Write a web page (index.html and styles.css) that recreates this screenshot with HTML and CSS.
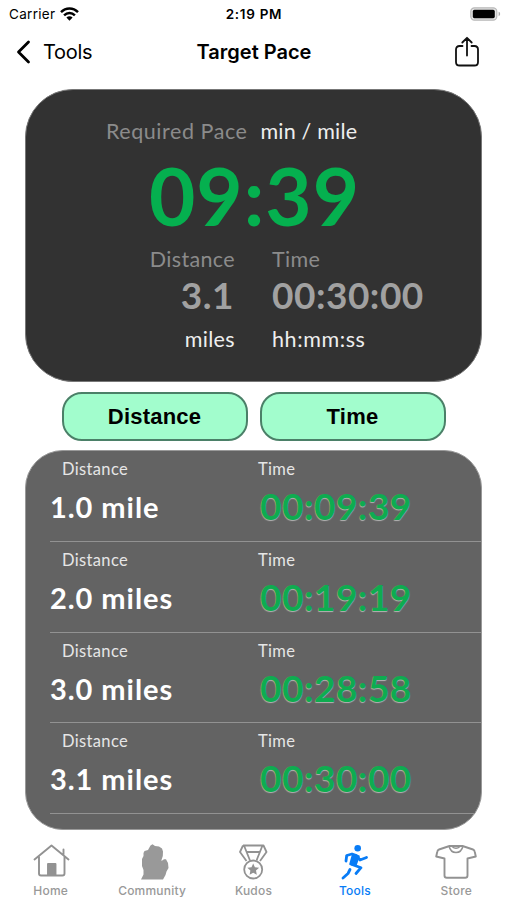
FILE: index.html
```html
<!DOCTYPE html>
<html lang="en">
<head>
<meta charset="utf-8">
<title>Target Pace</title>
<link rel="stylesheet" href="styles.css">
</head>
<body>
<div class="screen">
  <header class="status">
    <div class="carrier"><span>Carrier</span>
      <svg width="19" height="14" viewBox="0 0 19 14" fill="none" stroke="#000" stroke-width="2.4"><path d="M1 5.2C5.8.2 13.2.2 18 5.2M4.1 8.4c3.1-3.2 7.7-3.2 10.8 0"/><path d="M6.4 10.6c1.8-1.7 4.4-1.7 6.2 0L9.5 13.7Z" fill="#000" stroke="none"/></svg>
    </div>
    <div class="clock">2:19 PM</div>
    <svg class="battery" width="31" height="14" viewBox="0 0 31 14"><rect x=".8" y=".8" width="26" height="12.4" rx="3.6" fill="#e4e4e4" stroke="#b8b8b8" stroke-width="1.2"/><rect x="2.8" y="2.8" width="22" height="8.4" rx="1.6"/><path d="M28.6 4.8c2 .5 2 3.9 0 4.4Z" fill="#aaa"/></svg>
  </header>
  <nav class="nav">
    <div class="back"><svg width="15" height="24" viewBox="0 0 15 24" fill="none" stroke="#000" stroke-width="2.8" stroke-linecap="round" stroke-linejoin="round"><path d="M12.5 2 2.5 12l10 10"/></svg><span>Tools</span></div>
    <h1>Target Pace</h1>
    <svg class="share" width="26" height="32" viewBox="0 0 26 32" fill="none" stroke="#111" stroke-width="1.8" stroke-linecap="round" stroke-linejoin="round"><path d="M8.5 10H5.6Q2 10 2 13.6v12.3q0 3.600 3.600 3.600h14.800q3.600 0 3.600-3.600V13.600Q24 10 20.400 10h-2.900M13 19.500V2M8.300 6.500 13 1.800l4.700 4.700"/></svg>
  </nav>

  <section class="summary">
    <div class="heading"><span class="dim req">Required Pace</span><span class="unit mpm">min / mile</span></div>
    <div class="pace">09:39</div>
    <div class="inputs">
      <div class="col right"><div class="dim">Distance</div><div class="value dist">3.1</div><div class="unit">miles</div></div>
      <div class="col"><div class="dim">Time</div><div class="value">00:30:00</div><div class="unit hms">hh:mm:ss</div></div>
    </div>
  </section>

  <div class="buttons"><button>Distance</button><button>Time</button></div>

  <section class="splits">
    <div class="row"><div class="cell"><small>Distance</small><strong>1.0 mile</strong></div><div class="cell time"><small>Time</small><b>00:09:39</b></div></div>
    <div class="row"><div class="cell"><small>Distance</small><strong>2.0 miles</strong></div><div class="cell time"><small>Time</small><b>00:19:19</b></div></div>
    <div class="row"><div class="cell"><small>Distance</small><strong>3.0 miles</strong></div><div class="cell time"><small>Time</small><b>00:28:58</b></div></div>
    <div class="row"><div class="cell"><small>Distance</small><strong>3.1 miles</strong></div><div class="cell time"><small>Time</small><b>00:30:00</b></div></div>
  </section>

  <footer class="tabs">
    <div class="tab"><svg width="38" height="38" viewBox="0 0 38 38" fill="none" stroke="#929292" stroke-width="1.9" stroke-linecap="round" stroke-linejoin="round"><path d="M2.500 17.500 19.500 3.500l17 14M7 15v16.500q0 2 2 2h21.500q2 0 2-2V15M31.500 12.500V7.500"/><path d="M16 22h7.500v11H16Z" fill="#929292"/></svg><span>Home</span></div>
    <div class="tab"><svg width="38" height="38" viewBox="0 0 38 38" fill="#999"><path d="M11.500 9 15 8 17.500 3.500 19.500 2.200 22 4 26 4.500 29 6.500 30 9.500 29.800 14 28.500 18 28.500 19 31 17.300 33 17.300 35 21 35.500 26 33.500 29.500 32.500 33 30 37.500H8L10.500 32.500 10.500 28 9 24 9 17 10.500 14 10.500 11Z"/></svg><span>Community</span></div>
    <div class="tab"><svg width="38" height="38" viewBox="0 0 38 38" fill="none" stroke="#929292" stroke-width="1.8" stroke-linejoin="round"><path d="M9 3.500h20.500l3 6.500-6.500 9M9 3.500 6 10l6.500 9M10 3.500l6 15M28.500 3.500l-6 15M12.500 10h13.500"/><circle cx="19.200" cy="27.500" r="9"/><path d="m19.200 21.500 1.700 3.800 4.200.5-3.100 2.800.8 4.100-3.600-2-3.600 2 .8-4.100-3.100-2.800 4.200-.5Z" fill="#929292" stroke="none"/></svg><span>Kudos</span></div>
    <div class="tab active"><svg width="38" height="38" viewBox="0 0 38 38" fill="none" stroke="#087cf6" stroke-width="2.500" stroke-linecap="round" stroke-linejoin="round"><circle cx="21.700" cy="6.300" r="3.300" fill="#087cf6" stroke="none"/><path d="m17 13-2.500 9 5 .8 3-8.300Z" fill="#087cf6"/><path d="M10 19l.7-5.500L16 12l4.500 1.500 3.500 4.500 6.500-2.500M16 22.500l9 3.200-5 5.800M14 27.500l-2 4-5 4.500" stroke-width="2.800"/></svg><span>Tools</span></div>
    <div class="tab"><svg width="42" height="38" viewBox="0 0 42 38" fill="none" stroke="#929292" stroke-width="1.900" stroke-linejoin="round"><path d="M14.500 4 4 7.500Q2.500 8 2.200 10L1.200 14.500 9.500 16.500V33.500q0 2.300 2.300 2.300h18.400q2.300 0 2.300-2.300V16.500l8.300-2L39.800 10Q39.500 8 38 7.500L27.500 4Z"/><path d="M14 4q1.500 6.500 7 6.500T28 4M17 4.500q4 3.500 8 0" stroke-width="1.500"/></svg><span>Store</span></div>
  </footer>
</div>
</body>
</html>
```
FILE: styles.css
```css
* { box-sizing: border-box; }
body { margin: 0; background: #fff; color: #000; font-family: Inter, "Liberation Sans", sans-serif; }
.screen { width: 507px; height: 900px; display: flex; flex-direction: column; overflow: hidden; }
.status { height: 27px; display: grid; grid-template-columns: 1fr auto 1fr; align-items: center; padding: 0 6px 0 7px; }
.carrier { display: flex; align-items: center; gap: 5px; padding-left: 2px; font-size: 13.500px; letter-spacing: .3px; }
.clock { font-size: 13.500px; font-weight: 600; letter-spacing: .7px; }
.battery { justify-self: end; }
.nav { height: 50px; display: grid; grid-template-columns: 1fr auto 1fr; align-items: center; padding: 0 16px; }
.back { display: flex; align-items: center; gap: 12px; font-size: 20px; letter-spacing: -.3px; }
.nav h1 { margin: 0; padding-left: 1px; font-size: 20px; font-weight: 600; letter-spacing: 0; }
.share { justify-self: end; margin-right: 11px; }

.summary { margin: 12px 25px 0; height: 293px; padding-top: 29px; border: 1px solid #777; border-radius: 48px; background: #323232; font-family: Lato, sans-serif; }
.heading { display: flex; padding-left: 80px; gap: 13px; height: 24px; line-height: 24px; font-size: 21.500px; white-space: nowrap; }
.req { letter-spacing: .55px; }
.mpm { letter-spacing: .2px; }
.dim { color: #8b8b8b; }
.unit { color: #eee; }
.pace { height: 80px; line-height: 80px; margin-top: 12px; padding-left: 2px; text-align: center; font-size: 80px; font-weight: 700; letter-spacing: 1px; color: #05b04f; }
.inputs { display: grid; grid-template-columns: 209px 1fr; column-gap: 37px; margin-top: 12px; font-size: 21.500px; line-height: 24px; letter-spacing: .35px; }
.right { text-align: right; }
.value { height: 30px; margin: 9px 0 17px; line-height: 30px; font-size: 37px; font-weight: 700; letter-spacing: .5px; color: #a1a1a1; }
.dist { padding-right: 1px; }
.hms { letter-spacing: .6px; }

.buttons { display: flex; justify-content: center; gap: 12px; margin-top: 10px; }
button { width: 186px; height: 49px; padding: 0; border: 2px solid #4b8068; border-radius: 20px; background: #a2fdcd; color: #000; font: 700 22px "Liberation Sans", sans-serif; letter-spacing: .2px; }

.splits { margin: 9px 25px 0; height: 380px; border: 1px solid #999; border-radius: 38px; background: #636363; overflow: hidden; font-family: Lato, sans-serif; }
.row { display: grid; grid-template-columns: 208px 1fr; height: 90.800px; margin-left: 24px; border-bottom: 1.500px solid #929292; }
.cell small { display: block; height: 20px; margin-top: 8px; line-height: 20px; padding-left: 12px; font-size: 16.500px; letter-spacing: .35px; color: #e6e6e6; }
.cell strong, .cell b { display: block; height: 40px; margin-top: 8px; line-height: 40px; font-size: 29px; letter-spacing: .95px; color: #fff; white-space: nowrap; }
.cell.time small { padding-left: 0; }
.cell b { margin-top: 7px; padding-left: 2px; font-size: 37px; letter-spacing: .5px; color: #0eac50; text-shadow: 0 1px 1px #b4b4b4; }

.tabs { display: grid; grid-template-columns: repeat(5, 1fr); height: 58px; margin-top: 12px; }
.tab { display: flex; flex-direction: column; align-items: center; font-size: 12px; font-weight: 500; line-height: 16px; letter-spacing: .2px; color: #999; }
.tab span { margin-top: 3px; }
.active { color: #087cf6; }
```
